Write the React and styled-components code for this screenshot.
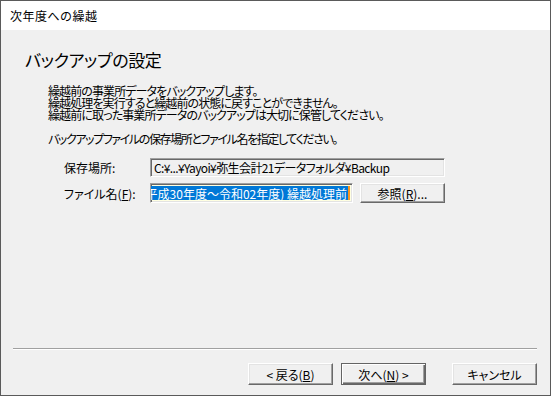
import React from "react";
import styled, { createGlobalStyle, css } from "styled-components";

const Global = createGlobalStyle`
  html, body { margin: 0; padding: 0; background: #f0f0f0; }
  body {
    font-family: "Noto Sans CJK JP", "Noto Sans", sans-serif;
    font-size: 12px;
    color: #000;
    font-feature-settings: "palt";
  }
  * { box-sizing: border-box; }
`;

const Window = styled.div`
  width: 551px;
  height: 396px;
  border: 1px solid #5a5a5a;
  display: flex;
  flex-direction: column;
  background: #f0f0f0;
`;

const TitleBar = styled.div`
  height: 29px;
  background: #fff;
  display: flex;
  align-items: center;
  padding-left: 9px;
  font-size: 12px;
  font-feature-settings: normal;
  letter-spacing: 0.5px;
`;

const Body = styled.div`
  flex: 1;
  display: flex;
  flex-direction: column;
`;

const Heading = styled.h1`
  margin: 19px 0 0 24px;
  font-size: 17px;
  font-weight: normal;
  line-height: 22px;
  letter-spacing: -0.4px;
`;

const Para = styled.p`
  margin: ${(p) => p.$top}px 0 0 47px;
  line-height: 12px;
  font-size: 12px;
  letter-spacing: ${(p) => p.$ls || 0}px;
`;

const FieldRow = styled.div`
  display: flex;
  align-items: center;
  gap: 7px;
  margin: ${(p) => p.$top}px 0 0 63px;
`;

const Label = styled.label`
  width: 79px;
  flex: none;
`;

const sunken = css`
  border: 1px solid;
  border-color: #a0a0a0 #fff #fff #a0a0a0;
  box-shadow: inset 1px 1px #696969, inset -1px -1px #e3e3e3;
`;

const ReadOnlyField = styled.div`
  ${sunken};
  width: ${(p) => p.$w}px;
  height: ${(p) => p.$h}px;
  background: #f0f0f0;
  display: flex;
  align-items: center;
  padding: 0 3px;
  white-space: nowrap;
  overflow: hidden;
  letter-spacing: -0.6px;
`;

const InputField = styled.div`
  ${sunken};
  width: ${(p) => p.$w}px;
  height: ${(p) => p.$h}px;
  background: #ffffe1;
  display: flex;
  justify-content: flex-end;
  align-items: stretch;
  padding: 2px;
  overflow: hidden;
  white-space: nowrap;
`;

const Selected = styled.span`
  background: #0078d7;
  color: #fff;
  display: flex;
  align-items: center;
  flex: none;
  padding-right: 1px;
  border-right: 2px solid #f7941d;
  font-feature-settings: normal;
`;

const Button = styled.button`
  font: inherit;
  color: #000;
  width: 85px;
  height: ${(p) => p.$h || 22}px;
  background: #f0f0f0;
  border: 1px solid;
  border-color: #fff #696969 #696969 #fff;
  box-shadow: inset -1px -1px #a0a0a0, inset 1px 1px #e3e3e3;
  padding: 0;
  display: flex;
  align-items: center;
  justify-content: center;
  ${(p) =>
    p.$default &&
    css`
      border-color: #646464;
      box-shadow: inset 1px 1px #fff, inset -1px -1px #696969,
        inset -2px -2px #a0a0a0;
    `}
`;

const U = styled.span`
  text-decoration: underline;
  text-underline-offset: 1px;
`;

const Spacer = styled.div`
  flex: 1;
`;

const Separator = styled.div`
  margin: 0 13px 0 12px;
  height: 2px;
  border-top: 1px solid #a0a0a0;
  border-bottom: 1px solid #fff;
`;

const ButtonBar = styled.div`
  display: flex;
  justify-content: flex-end;
  align-items: center;
  padding: 13px 13px 10px 0;
`;

const Gap = styled.div`
  width: ${(p) => p.$w}px;
  flex: none;
`;

export default function App() {
  return (
    <>
      <Global />
      <Window>
        <TitleBar>次年度への繰越</TitleBar>
        <Body>
          <Heading>バックアップの設定</Heading>
          <Para $top={14} $ls={-0.9}>
            繰越前の事業所データをバックアップします。
            <br />
            繰越処理を実行すると繰越前の状態に戻すことができません。
            <br />
            繰越前に取った事業所データのバックアップは大切に保管してください。
          </Para>
          <Para $top={12} $ls={-1.4}>
            バックアップファイルの保存場所とファイル名を指定してください。
          </Para>
          <FieldRow $top={13}>
            <Label>保存場所:</Label>
            <ReadOnlyField $w={295} $h={19}>
              C:¥...¥Yayoi¥弥生会計21データフォルダ¥Backup
            </ReadOnlyField>
          </FieldRow>
          <FieldRow $top={6}>
            <Label>
              ファイル名(<U>F</U>):
            </Label>
            <InputField $w={203} $h={20}>
              <Selected>(平成30年度～令和02年度) 繰越処理前</Selected>
            </InputField>
            <Button $h={20}>
              参照(<U>R</U>)...
            </Button>
          </FieldRow>
          <Spacer />
          <Separator />
          <ButtonBar>
            <Button>
              &lt; 戻る(<U>B</U>)
            </Button>
            <Gap $w={8} />
            <Button $default>
              次へ(<U>N</U>) &gt;
            </Button>
            <Gap $w={26} />
            <Button>キャンセル</Button>
          </ButtonBar>
        </Body>
      </Window>
    </>
  );
}
